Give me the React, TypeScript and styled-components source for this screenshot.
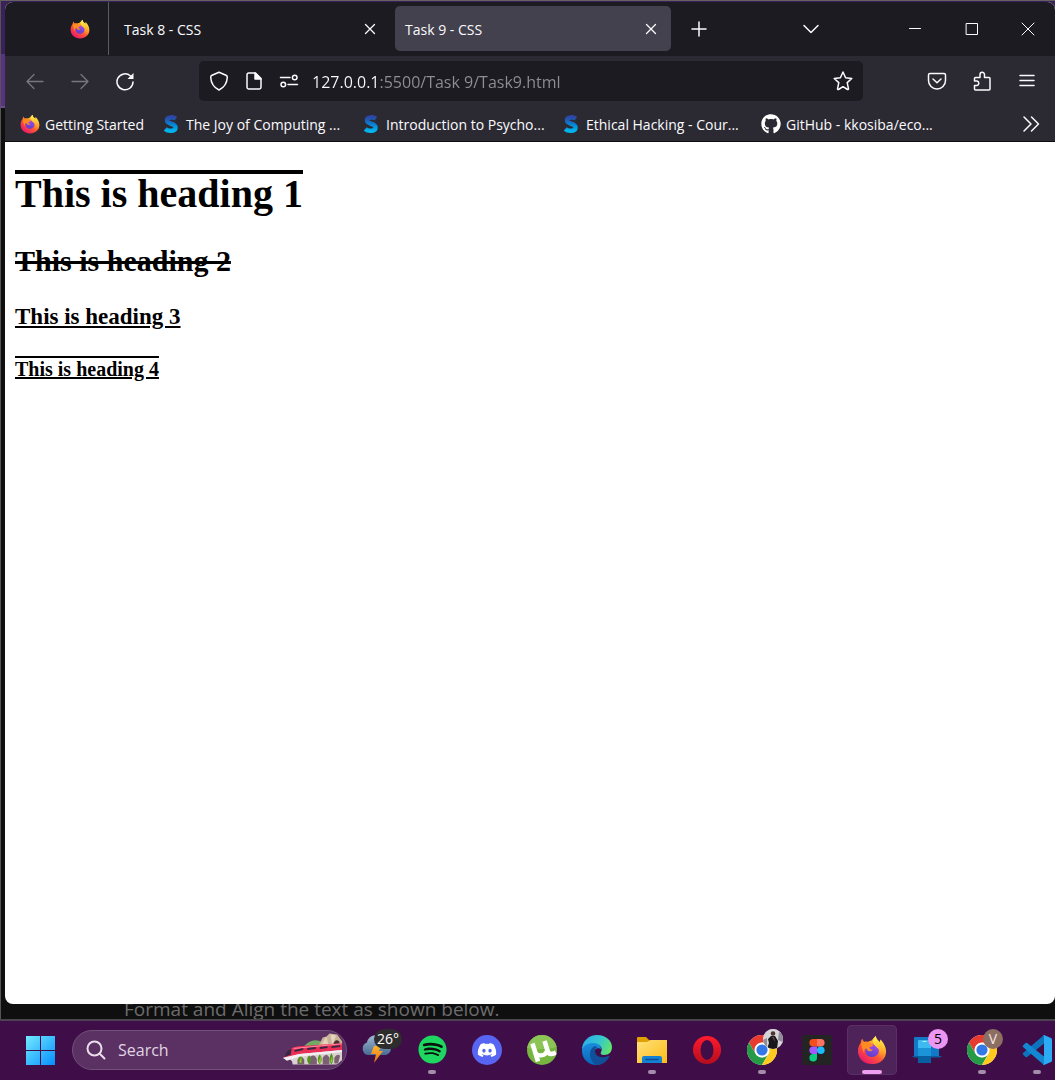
import React from "react";
import styled, { createGlobalStyle, css } from "styled-components";
import { FaDiscord, FaGithub, FaSpotify } from "react-icons/fa";

const GlobalStyle = createGlobalStyle`
  *, *::before, *::after { box-sizing: border-box; }
  body { margin: 0; background: #111; }
  button, input { font: inherit; color: inherit; }
  button { padding: 0; border: 0; background: none; }
`;

const uiFont = `"Open Sans", "Noto Sans", sans-serif`;

/* ---------- layout ---------- */

const Desktop = styled.div`
  display: flex;
  flex-direction: column;
  min-height: 100vh;
  overflow: hidden;
  font-family: ${uiFont};
  font-size: 14px;
  color: #fbfbfe;
`;

const Backdrop = styled.div`
  flex: 1;
  display: flex;
  flex-direction: column;
  padding: 1px 0 0 4px;
  border-top: 1px solid #626262;
  border-left: 1px solid #555;
  background: linear-gradient(#3b2159 0 53px, #583384 53px 105px, #6b4a90 105px 107px, #0f0f0f 107px);
`;

const BrowserWindow = styled.section`
  flex: 1;
  display: flex;
  flex-direction: column;
  overflow: hidden;
  border-radius: 8px;
  background: #fff;
`;

const BehindText = styled.p`
  display: flex;
  align-items: flex-end;
  height: 15px;
  margin: 0;
  padding-left: 119px;
  overflow: hidden;
  font-size: 19px;
  line-height: 20px;
  color: #6c6c6c;
  white-space: nowrap;
`;

/* ---------- tab strip ---------- */

const TabStrip = styled.header`
  display: flex;
  align-items: center;
  height: 54px;
  padding-bottom: 1px;
  background: #1c1b22;
`;

const PinnedArea = styled.div`
  display: flex;
  align-items: center;
  justify-content: flex-end;
  align-self: stretch;
  width: 104px;
  padding-right: 18px;
  border-right: 1px solid #5b5b62;
`;

const TabList = styled.div`
  display: flex;
  gap: 5px;
  padding: 0 5px;
`;

const Tab = styled.div<{ $active?: boolean }>`
  display: flex;
  align-items: center;
  justify-content: space-between;
  width: 276px;
  height: 45px;
  padding-left: 10px;
  border-radius: 5px;
  background: ${(p) => (p.$active ? "#42414d" : "transparent")};
`;

const TabTitle = styled.button`
  flex: 1;
  padding-top: 2px;
  text-align: left;
`;

const IconButton = styled.button<{ $width?: number }>`
  display: grid;
  place-items: center;
  flex: none;
  width: ${(p) => p.$width ?? 40}px;
  height: 40px;
  svg { display: block; }
`;

const Spacer = styled.div`
  flex: 1;
`;

const WindowControls = styled.div`
  display: flex;
  margin-left: 55px;
`;

/* ---------- toolbar ---------- */

const Toolbar = styled.nav`
  display: flex;
  align-items: center;
  gap: 5px;
  height: 50px;
  padding: 0 8px 0 10px;
  background: #2b2a33;
`;

const AddressBar = styled.form`
  flex: 1;
  display: flex;
  align-items: center;
  height: 40px;
  margin: 0 49px;
  padding-left: 2px;
  border-radius: 5px;
  background: #1c1b22;
`;

const AddressInput = styled.input`
  flex: 1;
  min-width: 0;
  height: 28px;
  margin-left: 6px;
  padding: 2px 0 0;
  border: 0;
  outline: 0;
  font-size: 16px;
  color: transparent;
  caret-color: #fbfbfe;
  background: linear-gradient(90deg, #fbfbfe 67px, #8f8e96 67px);
  background-clip: text;
  -webkit-background-clip: text;
`;

const BookmarkBar = styled.nav`
  display: flex;
  align-items: center;
  height: 36px;
  padding: 1px 4px 0 15px;
  border-bottom: 1px solid #0c0c0d;
  background: #2b2a33;
`;

const Bookmark = styled.a<{ $width: number }>`
  display: flex;
  align-items: center;
  gap: 5px;
  flex: none;
  width: ${(p) => p.$width}px;
  color: inherit;
  text-decoration: none;
  white-space: nowrap;
`;

/* ---------- page ---------- */

const Page = styled.main`
  flex: 1;
  padding: 28px 10px;
  font-family: "Liberation Serif", "Times New Roman", serif;
  font-size: 20px;
  color: #000;
  h1, h2, h3, h4 { margin: 0 0 26px; }
  h1 {
    width: fit-content;
    margin-bottom: 30px;
    border-top: 4px solid #000;
    font-size: 40px;
    line-height: 40px;
  }
  h2 { font-size: 30px; line-height: 34px; text-decoration: line-through; }
  h3 { font-size: 23px; line-height: 26px; text-decoration: underline; }
  h4 { font-size: 20px; line-height: 26px; text-decoration: underline overline; }
`;

/* ---------- taskbar ---------- */

const Taskbar = styled.footer`
  display: flex;
  align-items: center;
  gap: 5px;
  height: 61px;
  padding: 0 0 2px 15px;
  border-top: 2px solid #4b4350;
  overflow: hidden;
  background: #3f0e48;
`;

const SearchBox = styled.label`
  display: flex;
  align-items: center;
  gap: 12px;
  flex: none;
  width: 275px;
  height: 40px;
  margin-left: 2px;
  padding: 0 3px 0 13px;
  overflow: hidden;
  border: 1px solid #72507a;
  border-radius: 20px;
  background: #5a3162;
`;

const SearchInput = styled.input`
  flex: 1;
  min-width: 0;
  padding: 0;
  border: 0;
  outline: 0;
  background: none;
  font-size: 16px;
  &::placeholder { color: #e0d5e3; opacity: 1; }
`;

const AppButton = styled.button<{ $active?: boolean; $running?: boolean }>`
  position: relative;
  display: grid;
  place-items: center;
  flex: none;
  width: 50px;
  height: 50px;
  border-radius: 5px;
  svg { display: block; }
  ${(p) => p.$active && css`
    background: #4d2359;
    box-shadow: inset 0 0 0 1px #5a3064;
  `}
  ${(p) => (p.$active || p.$running) && css`
    &::after {
      content: "";
      position: absolute;
      bottom: 1px;
      left: 50%;
      width: ${p.$active ? 20 : 8}px;
      height: 4px;
      border-radius: 2px;
      background: ${p.$active ? "#ee9df0" : "#a48cab"};
      transform: translateX(-50%);
    }
  `}
`;

const Badge = styled.span<{ $bg: string; $fg: string; $wide?: boolean }>`
  position: absolute;
  top: 4px;
  right: ${(p) => (p.$wide ? 0 : 4)}px;
  width: ${(p) => (p.$wide ? 28 : 20)}px;
  height: 20px;
  border-radius: 10px;
  font-size: 14px;
  line-height: 20px;
  text-align: center;
  background: ${(p) => p.$bg};
  color: ${(p) => p.$fg};
`;

const SpotifyMark = styled.span`
  display: grid;
  border-radius: 50%;
  color: #1ed760;
  background: radial-gradient(#08110b 60%, transparent 62%);
`;

const DiscordMark = styled.span`
  display: grid;
  place-items: center;
  width: 30px;
  height: 30px;
  border-radius: 50%;
  background: #5865f2;
  color: #fff;
`;

/* ---------- drawings ---------- */

const Line = ({ size = 20, d, color = "#fbfbfe", w = 1.5, children }: {
  size?: number; d?: string; color?: string; w?: number; children?: React.ReactNode;
}) => (
  <svg width={size} height={size} viewBox="0 0 20 20" fill="none" stroke={color}
    strokeWidth={w} strokeLinecap="round" strokeLinejoin="round" aria-hidden="true">
    {d && <path d={d} />}
    {children}
  </svg>
);

const Firefox = ({ size }: { size: number }) => (
  <svg width={size} height={size} viewBox="0 0 32 32" aria-hidden="true">
    <defs>
      <linearGradient id="fxBody" x1=".85" y1=".1" x2=".2" y2=".95">
        <stop offset="0" stopColor="#fff44f" />
        <stop offset=".3" stopColor="#ffa62b" />
        <stop offset=".58" stopColor="#ff5634" />
        <stop offset="1" stopColor="#e9166f" />
      </linearGradient>
      <linearGradient id="fxGlobe" x1=".7" y1="0" x2=".3" y2="1">
        <stop offset="0" stopColor="#a44bea" />
        <stop offset="1" stopColor="#5b3fc7" />
      </linearGradient>
      <linearGradient id="fxFlame" x1=".5" y1="0" x2=".6" y2="1">
        <stop offset="0" stopColor="#fff44f" />
        <stop offset=".5" stopColor="#ffc02e" />
        <stop offset="1" stopColor="#ff8a2a" stopOpacity="0" />
      </linearGradient>
    </defs>
    <path fill="url(#fxBody)" d="M20 1c.3 2.400 1.500 3.900 3.100 5.300l1.300 1.400c0-1.200.3-2.200.8-3 2.300 2.500 5.800 7.500 5.800 12.800C31 25.500 24.500 31 16 31S1 25 1 17c0-3.700 1.300-6.500 3-8.600.1-1.900.7-3.400 1.800-4.400.3 1.300 1 2.500 2 3.200 1.200-.3 2.500-.3 3.700.1 1.400-1 2.800-1.300 3.700-1.300C16.500 4.700 18 3 20 1z" />
    <path fill="url(#fxGlobe)" d="M16 10c4.200-.2 7.300 2.800 7.300 6.600 0 4-3.200 6.800-7.200 6.800-4.100 0-7.200-2.800-7.200-6.700 0-1.500.6-2.800 1.500-3.800z" />
    <path fill="#ff8a22" d="M4 9c2.200-1.700 5.200-2 7.500-.8 1.300.1 2.400.4 3.300 1.100.9.700 1.700 1.100 2.500 1.300-.2 1.500-1.500 1.800-2.900 1.900-1.200.3-1 1-.8 1.600.5 1.400 2 1.800 3.400 1.200-.9 1.800-2.500 2.500-4.200 1.900-1.700-.6-2.400-1.700-2.700-3.100-1.800.4-3 2.400-2.300 5.400-2-3-2-6.500-3.800-10.500z" />
    <path fill="url(#fxFlame)" d="M20 1c.3 2.400 1.500 3.900 3.100 5.300 3.700 3.400 5.500 7.200 4.700 12.200-.7 3.500-3.200 6-6 6.800 3.300-3 3.200-7.800.8-10.700-1.500-2-4.400-3.300-5.400-6.200C16.500 5.700 18 3 20 1z" />
  </svg>
);

const SwayamMark = () => (
  <svg width="20" height="20" viewBox="0 0 20 20" fill="none" aria-hidden="true">
    <defs>
      <linearGradient id="sway" x1="0" y1="0" x2="0" y2="1">
        <stop offset="0" stopColor="#2c47a7" />
        <stop offset=".5" stopColor="#087fd0" />
        <stop offset="1" stopColor="#00b4ee" />
      </linearGradient>
    </defs>
    <path stroke="url(#sway)" strokeWidth="4.500" d="M14.800 4.700C12.500 2.800 6 2.600 6 6.200c0 4.300 8.500 2.800 8.500 7.200 0 4-7 4.300-10.300 1.600" />
  </svg>
);

const Train = () => (
  <svg width="62" height="36" viewBox="0 0 64 36" aria-hidden="true">
    <path fill="#72a967" d="M23 15Q32 4 43 10l3 6H23z" />
    <path fill="#c9b298" d="M39 13l4-8 4-1 3-3 8 1 5 7v20H41z" />
    <path fill="#e4d4bd" d="M42 12l5-8 2 9zM51 2l2 11 4-10z" />
    <path fill="#4b3030" d="M54 15v-3q2-6 6-3l2 6z" />
    <path fill="#d9d1d0" d="M2 27l12-6 49-4v10q-3 6-7 6H12q0-7-10-6z" />
    <path fill="#7a5f75" d="M17 33v-5q4-6 7 0v5zM29 33v-6q4-7 8 0v6zM43 33v-7q4-6 7 0v7zM55 32v-6q3-5 6-2l-2 8z" />
    <path fill="#52941f" d="M20 33q-4-5 0-11 4 6 0 11zM29 33q-4-4 0-10 4 5 0 10zM40 33q-4-5 0-11 4 6 0 11zM52 33q-4-5 0-12 4 6 0 12z" />
    <path fill="#a9c731" d="M19 30l2-5v7zM39 30l2-6v8zM51 30l2-6v7z" />
    <path fill="#e92f55" d="M4 25Q7 15 18 14l45-3v7l-44 4-15 4z" />
    <path fill="#ff8498" d="M12 16l51-5v1l-49 5z" />
    <path fill="#352847" d="M5 21q3-4 6-4l-1 6-6 2zM14 18l9-2v2l-9 2zM27 16l9-1v2l-9 1zM40 15l8-1v2l-8 1zM52 14l9-1v2l-9 1z" />
    <path fill="#f2eef3" d="M2 26l17-4 44-4v2l-44 5-13 4z" />
  </svg>
);

const Weather = () => (
  <svg width="34" height="34" viewBox="0 0 34 34" aria-hidden="true">
    <defs>
      <linearGradient id="cloud" x1="0" y1="0" x2="0" y2="1">
        <stop offset="0" stopColor="#a2b8d0" /><stop offset="1" stopColor="#476b96" />
      </linearGradient>
      <linearGradient id="bolt" x1="0" y1="0" x2="0" y2="1">
        <stop offset="0" stopColor="#ffb52e" /><stop offset="1" stopColor="#e46c13" />
      </linearGradient>
    </defs>
    <path fill="url(#cloud)" d="M8 22a6.500 6.500 0 0 1-1-12.500 9 9 0 0 1 17-2 7.500 7.500 0 0 1 2 14.500z" />
    <path fill="url(#bolt)" d="M14 13h7l-2 5h4l-9 12 2-9h-5z" />
  </svg>
);

const Windows = () => (
  <svg width="30" height="30" viewBox="0 0 30 30" aria-hidden="true">
    <defs>
      <linearGradient id="win" gradientUnits="userSpaceOnUse" x1="0" y1="0" x2="29" y2="29">
        <stop offset="0" stopColor="#76edff" /><stop offset="1" stopColor="#0991ff" />
      </linearGradient>
    </defs>
    <path fill="url(#win)" d="M1 1h14v14H1zM16 1h14v14H16zM1 16h14v14H1zM16 16h14v14H16z" />
  </svg>
);

const UTorrent = () => (
  <svg width="30" height="30" viewBox="0 0 30 30" fill="none" aria-hidden="true">
    <defs><clipPath id="utDisc"><circle cx="15" cy="15" r="15" /></clipPath></defs>
    <g clipPath="url(#utDisc)">
      <path fill="#76b53f" d="M0 0h30v30H0z" />
      <path fill="#8cc456" d="M0 0h30v12Q15 16 0 13z" />
      <path stroke="#fff" strokeWidth="4.600" d="M5.500 8.500l5.500 18" />
      <path stroke="#fff" strokeWidth="4.200" d="M8.500 17.500c2 4.500 10.500 3.500 11-1.500" />
      <path stroke="#fff" strokeWidth="4.600" d="M17.500 6l3.300 10.500c.8 2.500 4 3.500 8.200 1" />
    </g>
  </svg>
);

const Edge = () => (
  <svg width="30" height="30" viewBox="0 0 30 30" aria-hidden="true">
    <defs>
      <linearGradient id="edTop" x1="0" y1=".3" x2="1" y2=".6">
        <stop offset="0" stopColor="#2aaeea" /><stop offset=".55" stopColor="#35c7cf" /><stop offset="1" stopColor="#62e568" />
      </linearGradient>
      <linearGradient id="edSide" x1="0" y1="0" x2="0" y2="1">
        <stop offset="0" stopColor="#1b8fe0" /><stop offset="1" stopColor="#0866b8" />
      </linearGradient>
    </defs>
    <path fill="url(#edSide)" d="M0 15C1 9 6 7 11 7c5 0 8 3 8 7-4-2-7 1-7 4 0 5 6 9 13 6-3 4-7 6-11 6C6 30-.5 23 0 15z" />
    <path fill="#104f99" d="M13 11c-4 2-5 5-5 9 0 5 4 9 7 10 6 0 10-4 12-8 .5-1 0-1.500-1-1-7 3-13 0-13-5 0-2 1-3 2-4z" />
    <path fill="url(#edTop)" d="M0 15C0 6 7 0 15 0c9 0 15 6 15 12 0 5-3 8-8 8-3 0-4-1-3-3 2-3 0-9-8-9-5 0-9 2-11 7z" />
  </svg>
);

const Folder = () => (
  <svg width="30" height="30" viewBox="0 0 30 30" aria-hidden="true">
    <defs>
      <linearGradient id="fold" x1="0" y1="0" x2="1" y2="1">
        <stop offset="0" stopColor="#ffe17a" /><stop offset="1" stopColor="#fdbc16" />
      </linearGradient>
    </defs>
    <path fill="#dfa000" d="M0 3q0-1 1-1h8l3 3v5H0z" />
    <path fill="url(#fold)" d="M0 7h10l3-2h17v23H0z" />
    <path fill="#1681d2" d="M5 28v-5q0-2 2-2h16q2 0 2 2v5z" />
    <path stroke="#084f93" strokeWidth="1.500" strokeLinecap="round" d="M9 24.500h12" />
  </svg>
);

const Opera = () => (
  <svg width="30" height="30" viewBox="0 0 30 30" aria-hidden="true">
    <defs>
      <linearGradient id="op" x1="0" y1="0" x2="0" y2="1">
        <stop offset="0" stopColor="#ff1b2d" /><stop offset="1" stopColor="#b50d1c" />
      </linearGradient>
    </defs>
    <path fill="url(#op)" fillRule="evenodd" d="M15 1a14 14 0 1 0 0 28 14 14 0 0 0 0-28zm0 4a6.500 10 0 1 1 0 20 6.500 10 0 0 1 0-20z" />
  </svg>
);

const Chrome = () => (
  <svg width="30" height="30" viewBox="0 0 30 30" aria-hidden="true">
    <circle cx="15" cy="15" r="15" fill="#fff" />
    <path fill="#e63b2e" d="M2 7.500a15 15 0 0 1 26 0H15a7.500 7.500 0 0 0-6.500 11.200z" />
    <path fill="#269b47" d="M2 7.500a15 15 0 0 0 13 22.500l6.500-11.200a7.500 7.500 0 0 1-13 0z" />
    <path fill="#ffc91f" d="M28 7.500H15a7.500 7.500 0 0 1 6.500 11.200L15 30A15 15 0 0 0 28 7.500z" />
    <circle cx="15" cy="15" r="7.200" fill="#fff" />
    <circle cx="15" cy="15" r="5.600" fill="#3478e8" />
  </svg>
);

const Avatar = () => (
  <svg width="20" height="20" viewBox="0 0 20 20" aria-hidden="true">
    <defs><clipPath id="face"><circle cx="10" cy="10" r="10" /></clipPath></defs>
    <g clipPath="url(#face)">
      <path fill="#d5d4d8" d="M0 0h20v20H0z" />
      <path fill="#8e8c95" d="M0 11l4-2v9H0zM16 3l4 2v8l-5-2z" />
      <path fill="#17171c" d="M5 10l3-3 4 0 3 5-1 8H4l2-6z" />
      <circle cx="10" cy="4.500" r="2.300" fill="#4d342c" />
      <path fill="#6b4a3f" d="M9 8l2 0 1 5z" />
    </g>
  </svg>
);

const Figma = () => (
  <svg width="30" height="30" viewBox="0 0 30 30" aria-hidden="true">
    <rect width="30" height="30" rx="2" fill="#242424" />
    <path fill="#f24e1e" d="M15 4h-3.800a3.800 3.800 0 0 0 0 7.600H15z" />
    <path fill="#ff7262" d="M15 4h3.800a3.800 3.800 0 0 1 0 7.600H15z" />
    <path fill="#a259ff" d="M15 11.500h-3.800a3.800 3.800 0 0 0 0 7.600H15z" />
    <circle cx="18.800" cy="15.200" r="3.800" fill="#1abcfe" />
    <path fill="#0acf83" d="M15 19h-3.800a3.800 3.800 0 1 0 3.800 3.800z" />
  </svg>
);

const PhoneLink = () => (
  <svg width="30" height="30" viewBox="0 0 30 30" aria-hidden="true">
    <path fill="#1179c6" d="M2 3q0-1 1-1h24v19H2z" />
    <path fill="#0a5e9f" d="M0 21h30l-2 1.500H2z" />
    <rect x="6" y="5" width="13" height="23" rx="1" fill="#3dbaf0" />
    <path fill="#bdefff" d="M10.500 6h4v1h-4z" />
    <path fill="#1c95d8" d="M6 13h13v8H6z" />
    <path fill="#075f9f" d="M6 21h13v6q0 1-1 1H7q-1 0-1-1z" />
  </svg>
);

const VSCode = () => (
  <svg width="30" height="30" viewBox="0 0 30 30" aria-hidden="true">
    <path fill="#0b74bd" d="M1 19.500l2.500 2.500q.8.600 1.600 0L22 8.500V0L1 18q-.8.700 0 1.500z" />
    <path fill="#1287d2" d="M1 10.500L3.500 8q.8-.6 1.600 0L22 21.500V30L1 12q-.8-.7 0-1.500z" />
    <path fill="#2cabf4" d="M21 30q1-.5 1-2V2q0-1.500-1-2h1l7 3q1 .5 1 1.500v21q0 1-1 1.500l-7 3z" />
  </svg>
);

/* ---------- data ---------- */

const bookmarks = [
  { label: "Getting Started", width: 141, icon: <Firefox size={20} /> },
  { label: "The Joy of Computing ...", width: 200, icon: <SwayamMark /> },
  { label: "Introduction to Psycho...", width: 200, icon: <SwayamMark /> },
  { label: "Ethical Hacking - Cour...", width: 200, icon: <SwayamMark /> },
  { label: "GitHub - kkosiba/eco...", width: 200, icon: <FaGithub size={20} color="#fff" /> },
];

const apps: { name: string; icon: React.ReactNode; active?: boolean; running?: boolean; badge?: React.ReactNode }[] = [
  { name: "Weather", icon: <Weather />, badge: <Badge $bg="#2d2d2d" $fg="#fff" $wide>26°</Badge> },
  { name: "Spotify", running: true, icon: <SpotifyMark><FaSpotify size={29} /></SpotifyMark> },
  { name: "Discord", icon: <DiscordMark><FaDiscord size={20} /></DiscordMark> },
  { name: "uTorrent", icon: <UTorrent /> },
  { name: "Edge", icon: <Edge /> },
  { name: "File Explorer", running: true, icon: <Folder /> },
  { name: "Opera", icon: <Opera /> },
  { name: "Chrome", running: true, icon: <Chrome />, badge: <Badge $bg="#d5d4d8" $fg="#000"><Avatar /></Badge> },
  { name: "Figma", icon: <Figma /> },
  { name: "Firefox", active: true, icon: <Firefox size={30} /> },
  { name: "Phone Link", icon: <PhoneLink />, badge: <Badge $bg="#eb96f2" $fg="#000">5</Badge> },
  { name: "Chrome, profile V", running: true, icon: <Chrome />, badge: <Badge $bg="#8d6e63" $fg="#f0e6e2">V</Badge> },
  { name: "Visual Studio Code", running: true, icon: <VSCode /> },
];

const closePath = "M5.500 5.500l9 9M14.500 5.500l-9 9";

export default function App() {
  return (
    <Desktop>
      <GlobalStyle />
      <Backdrop>
        <BrowserWindow>
          <TabStrip>
            <PinnedArea><Firefox size={20} /></PinnedArea>
            <TabList>
              {["Task 8 - CSS", "Task 9 - CSS"].map((title, i) => (
                <Tab key={title} $active={i === 1}>
                  <TabTitle type="button">{title}</TabTitle>
                  <IconButton type="button" aria-label={`Close ${title}`}>
                    <Line d={closePath} w={1.3} />
                  </IconButton>
                </Tab>
              ))}
            </TabList>
            <IconButton type="button" $width={45} aria-label="New tab"><Line d="M10 3v14M3 10h14" /></IconButton>
            <Spacer />
            <IconButton type="button" aria-label="List all tabs"><Line d="M3 6.500l7 7 7-7" /></IconButton>
            <WindowControls>
              <IconButton type="button" $width={57} aria-label="Minimize"><Line d="M4.500 9.500h11" w={1} /></IconButton>
              <IconButton type="button" $width={57} aria-label="Maximize"><Line d="M4.500 4.500h11v11h-11z" w={1} /></IconButton>
              <IconButton type="button" $width={55} aria-label="Close window"><Line d="M4 4l12 12M16 4L4 16" w={1} /></IconButton>
            </WindowControls>
          </TabStrip>

          <Toolbar aria-label="Navigation">
            <IconButton type="button" aria-label="Back"><Line d="M18 10.500H2M9 3.500l-7 7 7 7" color="#77767e" w={1.3} /></IconButton>
            <IconButton type="button" aria-label="Forward"><Line d="M2 10.500h16M11 3.500l7 7-7 7" color="#77767e" w={1.3} /></IconButton>
            <IconButton type="button" aria-label="Reload">
              <Line><path d="M18 11A8 8 0 1 1 15.500 5" /><path d="M18.500 2v6h-6z" fill="#fbfbfe" stroke="none" /></Line>
            </IconButton>
            <AddressBar onSubmit={(e) => e.preventDefault()}>
              <IconButton type="button" $width={35} aria-label="Tracking protection">
                <Line d="M10 1.200l7 3q1.300.6 1.300 2C18 12 15 16.500 10 19 5 16.500 2 12 1.700 6.200q0-1.400 1.300-2z" />
              </IconButton>
              <IconButton type="button" $width={35} aria-label="Site information">
                <Line><path d="M4.700 2h6.800L17 7.500v8.800q0 1.700-1.700 1.700H4.700Q3 18 3 16.300V3.700Q3 2 4.700 2z" /><path d="M11 2v6h6z" fill="#fbfbfe" /></Line>
              </IconButton>
              <IconButton type="button" $width={35} aria-label="Permissions">
                <Line><path d="M1.500 6.500h9.500M9 13.500h9.500" /><circle cx="15.700" cy="6.500" r="2.300" /><circle cx="4.300" cy="13.500" r="2.300" /></Line>
              </IconButton>
              <AddressInput aria-label="Address" defaultValue="127.0.0.1:5500/Task 9/Task9.html" spellCheck={false} />
              <IconButton type="button" aria-label="Bookmark this page">
                <Line d="M10 1l2.600 5.700 6.200.8-4.600 4.100 1.300 6.200q0 1-1 .7L10 15.700l-4.500 2.800q-1 .3-1-.7l1.300-6.200L1.200 7.500l6.200-.8z" />
              </IconButton>
            </AddressBar>
            <IconButton type="button" aria-label="Save to Pocket">
              <Line><path d="M3 2.500h14q1.500 0 1.500 1.500v5.500a8.500 8.500 0 0 1-17 0V4Q1.500 2.500 3 2.500z" /><path d="M6 8l4 3.700L14 8" /></Line>
            </IconButton>
            <IconButton type="button" aria-label="Extensions">
              <Line d="M3.500 19q-1 0-1-1v-3.500H5a2.300 2.300 0 0 0 0-4.500H2.500V7.500q0-1 1-1h4.500V3.500a2.200 2.200 0 0 1 4.500 0v3H17q1 0 1 1V18q0 1-1 1z" />
            </IconButton>
            <IconButton type="button" aria-label="Application menu"><Line d="M3 4.500h14M3 9.500h14M3 14.500h14" /></IconButton>
          </Toolbar>

          <BookmarkBar aria-label="Bookmarks">
            {bookmarks.map((b) => (
              <Bookmark key={b.label} href="#" $width={b.width}>{b.icon}{b.label}</Bookmark>
            ))}
            <Spacer />
            <IconButton type="button" aria-label="More bookmarks"><Line d="M3 3l7 7-7 7M10.500 3l7 7-7 7" /></IconButton>
          </BookmarkBar>

          <Page>
            <h1>This is heading 1</h1>
            <h2>This is heading 2</h2>
            <h3>This is heading 3</h3>
            <h4>This is heading 4</h4>
          </Page>
        </BrowserWindow>
        <BehindText>Format and Align the text as shown below.</BehindText>
      </Backdrop>

      <Taskbar>
        <AppButton type="button" aria-label="Start"><Windows /></AppButton>
        <SearchBox>
          <Line size={20} w={2} color="#e8dfea"><circle cx="8.500" cy="8.500" r="7" /><path d="M14 14l4.500 4.500" /></Line>
          <SearchInput type="search" placeholder="Search" aria-label="Search" />
          <Train />
        </SearchBox>
        {apps.map((app) => (
          <AppButton key={app.name} type="button" aria-label={app.name} $active={app.active} $running={app.running}>
            {app.icon}
            {app.badge}
          </AppButton>
        ))}
      </Taskbar>
    </Desktop>
  );
}
